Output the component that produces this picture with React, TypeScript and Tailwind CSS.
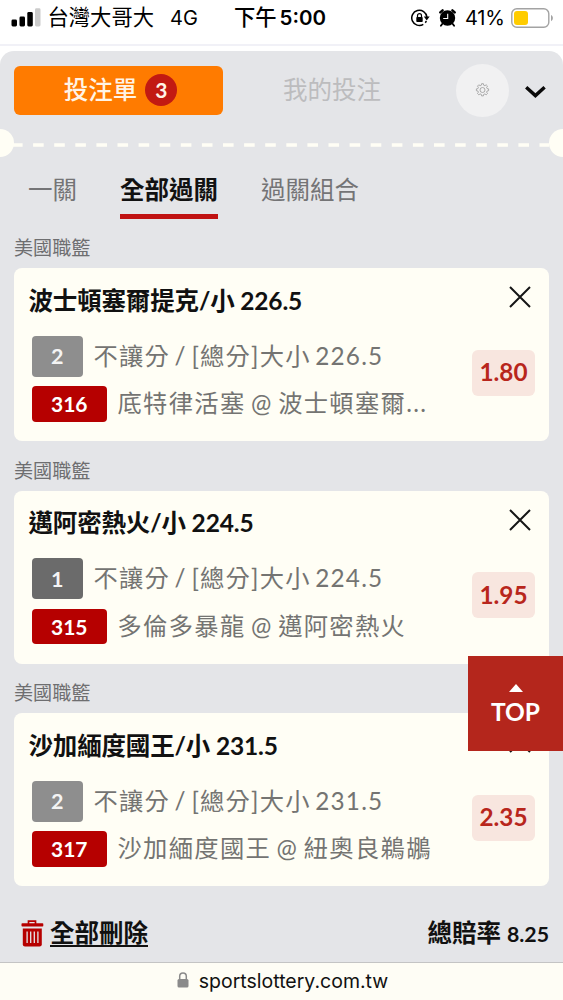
import { clsx } from 'clsx';

interface Bet {
  league: string;
  title: string;
  pick: string;
  pickTone: 'light' | 'dark';
  market: string;
  code: string;
  match: string;
  odds: string;
}

const bets: Bet[] = [
  {
    league: '美國職籃',
    title: '波士頓塞爾提克/小 226.5',
    pick: '2',
    pickTone: 'light',
    market: '不讓分 / [總分]大小 226.5',
    code: '316',
    match: '底特律活塞 @ 波士頓塞爾...',
    odds: '1.80',
  },
  {
    league: '美國職籃',
    title: '邁阿密熱火/小 224.5',
    pick: '1',
    pickTone: 'dark',
    market: '不讓分 / [總分]大小 224.5',
    code: '315',
    match: '多倫多暴龍 @ 邁阿密熱火',
    odds: '1.95',
  },
  {
    league: '美國職籃',
    title: '沙加緬度國王/小 231.5',
    pick: '2',
    pickTone: 'light',
    market: '不讓分 / [總分]大小 231.5',
    code: '317',
    match: '沙加緬度國王 @ 紐奧良鵜鶘',
    odds: '2.35',
  },
];

function SignalIcon() {
  return (
    <svg width="30" height="20" viewBox="0 0 30 20">
      <rect x="0.5" y="11.5" width="5.5" height="7" rx="1.4" fill="#000" />
      <rect x="8.5" y="8.5" width="5.5" height="10" rx="1.4" fill="#000" />
      <rect x="16.3" y="4" width="5.5" height="14.5" rx="1.4" fill="#000" />
      <rect x="24" y="0.3" width="5.5" height="18.2" rx="1.4" fill="#cbcbcb" />
    </svg>
  );
}

function RotationLockIcon() {
  return (
    <svg width="19" height="18" viewBox="0 0 19 18" fill="none">
      <path d="M12.3 15.4A7.6 7.6 0 1 1 15.9 8" stroke="#000" strokeWidth="1.5" />
      <path d="M15.3 12a7.6 7.6 0 0 1-1 1.8" stroke="#000" strokeWidth="1.5" />
      <path d="M12.8 7.5h5.9l-3 4z" fill="#000" />
      <rect x="5.3" y="8" width="6.4" height="5" rx="0.8" fill="#000" />
      <path d="M6.5 8.2V6.7a2 2 0 0 1 4 0v1.5" stroke="#000" strokeWidth="1.2" />
    </svg>
  );
}

function AlarmIcon() {
  return (
    <svg width="17" height="18" viewBox="0 0 17 18" fill="none">
      <circle cx="8.5" cy="9" r="7.7" fill="#000" />
      <path d="M1.3 3.4 3.6 1.3M15.7 3.4 13.4 1.3" stroke="#000" strokeWidth="2.4" strokeLinecap="round" />
      <path d="m3.2 15-1.3 1.8M13.8 15l1.3 1.8" stroke="#000" strokeWidth="1.8" strokeLinecap="round" />
      <path d="M8.7 4.8v4.7H4.2" stroke="#fff" strokeWidth="1.1" />
    </svg>
  );
}

function BatteryIcon() {
  return (
    <svg width="43" height="20" viewBox="0 0 43 20" fill="none">
      <rect x="0.8" y="0.8" width="37" height="18.4" rx="5" stroke="#a3a3a3" strokeWidth="1.4" />
      <rect x="3" y="3" width="14" height="14" rx="3" fill="#ffcc00" />
      <path d="M40 7v6.2c1.2-.5 1.9-1.6 1.9-3.1S41.2 7.5 40 7z" fill="#a3a3a3" />
    </svg>
  );
}

function GearIcon() {
  return (
    <svg width="15" height="15" viewBox="0 0 15 15" fill="none" stroke="#999" strokeWidth="0.8" strokeLinejoin="round">
      <path d="M6.3 2.2 6.6.7h1.8l.3 1.5 1.2.5 1.3-.9 1.3 1.3-.9 1.3.5 1.2 1.5.3v1.8l-1.5.3-.5 1.2.9 1.3-1.3 1.3-1.3-.9-1.2.5-.3 1.5H6.6l-.3-1.5-1.2-.5-1.3.9-1.3-1.3.9-1.3-.5-1.2-1.5-.3V5.9l1.5-.3.5-1.2-.9-1.3 1.3-1.3 1.3.9z" />
      <circle cx="7.5" cy="7" r="2.5" />
    </svg>
  );
}

function TrashIcon() {
  return (
    <svg width="23" height="27" viewBox="0 0 23 27" fill="none">
      <path d="M7.5 4V1.2h7V4" stroke="#b60000" strokeWidth="1.7" />
      <rect x="0.5" y="3.2" width="21.8" height="3.4" rx="0.8" fill="#b60000" />
      <path d="M1.8 8.6h19v15.6a2.2 2.2 0 0 1-2.2 2.2H4a2.2 2.2 0 0 1-2.2-2.2z" fill="#b60000" />
      <path d="M6.1 11.5v11.5M9.7 11.5v11.5M13.3 11.5v11.5M16.9 11.5v11.5" stroke="#e4e5e8" strokeWidth="1.3" />
    </svg>
  );
}

function StatusBar() {
  return (
    <div className="flex h-[46px] shrink-0 items-start border-b-2 border-[#f1f1f7] bg-white pr-[9px] pl-[11px] font-['Inter','Noto_Sans_CJK_TC',sans-serif] text-black">
      <div className="flex h-[36px] w-[223px] items-center">
        <SignalIcon />
        <span className="ml-[6.5px] text-[21.3px] whitespace-nowrap">台灣大哥大</span>
        <span className="ml-[16px] text-[20px]">4G</span>
      </div>
      <div className="flex h-[36px] w-[177px] items-center whitespace-nowrap">
        <span className="text-[21.3px] font-medium">下午</span>
        <span className="ml-[3px] text-[20.5px] font-semibold">5:00</span>
      </div>
      <div className="flex h-[36px] items-center">
        <RotationLockIcon />
        <span className="ml-[9px]">
          <AlarmIcon />
        </span>
        <span className="ml-[9px] w-[41px] text-[20px] tracking-[-0.2px]">41%</span>
        <span className="ml-[5px]">
          <BatteryIcon />
        </span>
      </div>
    </div>
  );
}

function SlipHeader() {
  return (
    <div className="flex h-[78px] shrink-0 items-center pl-[14px]">
      <button className="flex h-[49px] w-[209px] items-center justify-center gap-[8px] rounded-[6px] bg-[#ff7b00] pl-[4px] text-[24.5px] font-medium text-[#fff4e6]">
        投注單
        <span className="flex size-[32px] items-center justify-center rounded-full bg-[#c21a12] text-[21px] font-bold">
          3
        </span>
      </button>
      <button className="ml-[60px] text-[24.5px] text-[#bcbcbe]">我的投注</button>
      <button className="ml-[75px] flex size-[53px] items-center justify-center rounded-full bg-[#f1f1f2]">
        <GearIcon />
      </button>
      <svg className="mt-px ml-[15px]" width="23" height="16" viewBox="0 0 23 16" fill="none">
        <path d="m2.2 4.2 9.2 8.4 9.2-8.4" stroke="#0a0a0a" strokeWidth="3.4" />
      </svg>
    </div>
  );
}

// Ticket-style tear line with a notch on each edge
function TearLine() {
  return (
    <div className="flex h-[28px] shrink-0 items-center justify-between overflow-hidden">
      <span className="-ml-[14px] size-[28px] shrink-0 rounded-full bg-[#fffef5]" />
      <svg className="mt-[3px] -ml-[2px] flex-1" height="4" preserveAspectRatio="none">
        <line x1="0" x2="560" y1="2" y2="2" stroke="#fffef5" strokeWidth="3.3" strokeDasharray="10.6 10.5" />
      </svg>
      <span className="-mr-[14px] size-[28px] shrink-0 rounded-full bg-[#fffef5]" />
    </div>
  );
}

function Tabs() {
  return (
    <div className="flex h-[62px] shrink-0 pl-[28px] text-[24.5px] text-[#747476]">
      <button className="flex items-start pt-[15px] leading-[36px]">一關</button>
      <button className="ml-[43px] flex flex-col border-b-[5px] border-[#c01212] pt-[15px] leading-[36px] font-bold text-[#111]">
        全部過關
      </button>
      <button className="ml-[43px] flex items-start pt-[15px] leading-[36px]">過關組合</button>
    </div>
  );
}

function BetCard({ bet }: { bet: Bet }) {
  return (
    <section className="h-[222.5px] shrink-0 px-[14px]">
      <h2 className="flex h-[49.2px] items-center pt-[10px] text-[19.1px] text-[#6e6e70]">{bet.league}</h2>
      <div className="h-[173.3px] rounded-[8px] bg-[#fffef5] pt-[14.5px] pr-[14px] pl-[14.5px]">
        <div className="flex h-[36px] items-center justify-between">
          <h3 className="text-[24.5px] leading-[36px] font-bold tracking-[-0.16px] whitespace-nowrap text-[#111]">
            {bet.title}
          </h3>
          <svg className="mr-[3px] mb-[7px]" width="24" height="24" viewBox="0 0 24 24" fill="none">
            <path d="m2 2 20 20M22 2 2 22" stroke="#151515" strokeWidth="2" />
          </svg>
        </div>
        <div className="flex justify-between">
          <div className="pt-[17px] pl-[3px] text-[24.3px] tracking-[1.2px] text-[#747472]">
            <div className="flex h-[41px] items-center">
              <span
                className={clsx(
                  'flex h-[41px] w-[51.5px] items-center justify-center rounded-[4px] text-[21.5px] font-bold tracking-normal text-[#f4f4f4]',
                  bet.pickTone === 'dark' ? 'bg-[#6b6b6b]' : 'bg-[#8e8e8e]'
                )}
              >
                {bet.pick}
              </span>
              <span className="ml-[10.5px] whitespace-nowrap [word-spacing:-2.8px]">{bet.market}</span>
            </div>
            <div className="mt-[9.5px] flex h-[35.5px] items-center">
              <span className="flex h-[35.5px] w-[75.5px] items-center justify-center rounded-[4px] bg-[#b60000] text-[21px] font-bold tracking-normal text-white">
                {bet.code}
              </span>
              <span className="mb-px ml-[10.5px] tracking-[1.3px] whitespace-nowrap [word-spacing:-2px]">
                {bet.match}
              </span>
            </div>
          </div>
          <span className="mt-[31px] flex h-[46px] w-[63px] items-center justify-center rounded-[6px] bg-[#f8e6df] text-[24.3px] font-bold text-[#b8261c]">
            {bet.odds}
          </span>
        </div>
      </div>
    </section>
  );
}

export default function App() {
  return (
    <div className="relative flex h-[1000px] w-[563px] flex-col overflow-hidden bg-white font-['Lato','Noto_Sans_CJK_TC',sans-serif]">
      <StatusBar />
      <main className="mt-[5px] flex min-h-0 flex-1 flex-col overflow-hidden rounded-t-[14px] bg-[#e4e5e8]">
        <SlipHeader />
        <TearLine />
        <Tabs />
        {bets.map((bet) => (
          <BetCard key={bet.code} bet={bet} />
        ))}
        <div className="flex h-[76px] shrink-0 items-center justify-between pt-[18px] pr-[14px] pl-[21px] text-[#111]">
          <button className="flex items-center gap-[6px]">
            <TrashIcon />
            <span className="border-b-2 border-[#111] text-[24.5px] leading-[24px] font-bold">全部刪除</span>
          </button>
          <span className="text-[24.5px] font-bold">
            總賠率 <span className="text-[21.3px]">8.25</span>
          </span>
        </div>
      </main>

      {/* Browser address bar */}
      <footer className="flex h-[38px] shrink-0 items-center justify-center gap-[10px] border-t border-[#c4c4c4] bg-[#fefdf5] pl-[2px] font-['Inter',sans-serif] text-[19.5px] text-[#111]">
        <svg className="mb-[3px]" width="12" height="16" viewBox="0 0 12 16" fill="none">
          <rect x="0.5" y="7" width="11" height="8.5" rx="1.5" fill="#8a8a8a" />
          <path d="M2.7 7.5V4.3a3.3 3.3 0 0 1 6.6 0v3.2" stroke="#8a8a8a" strokeWidth="1.5" />
        </svg>
        sportslottery.com.tw
      </footer>

      <button className="absolute top-[656px] right-0 flex h-[95px] w-[95px] flex-col items-center bg-[#b4261c] pt-[28px] text-white">
        <svg width="14" height="8" viewBox="0 0 14 8">
          <path d="M0 8 7 0l7 8z" fill="#fff" />
        </svg>
        <span className="mt-[5px] text-[24.5px] leading-[30px] font-bold">TOP</span>
      </button>
    </div>
  );
}
